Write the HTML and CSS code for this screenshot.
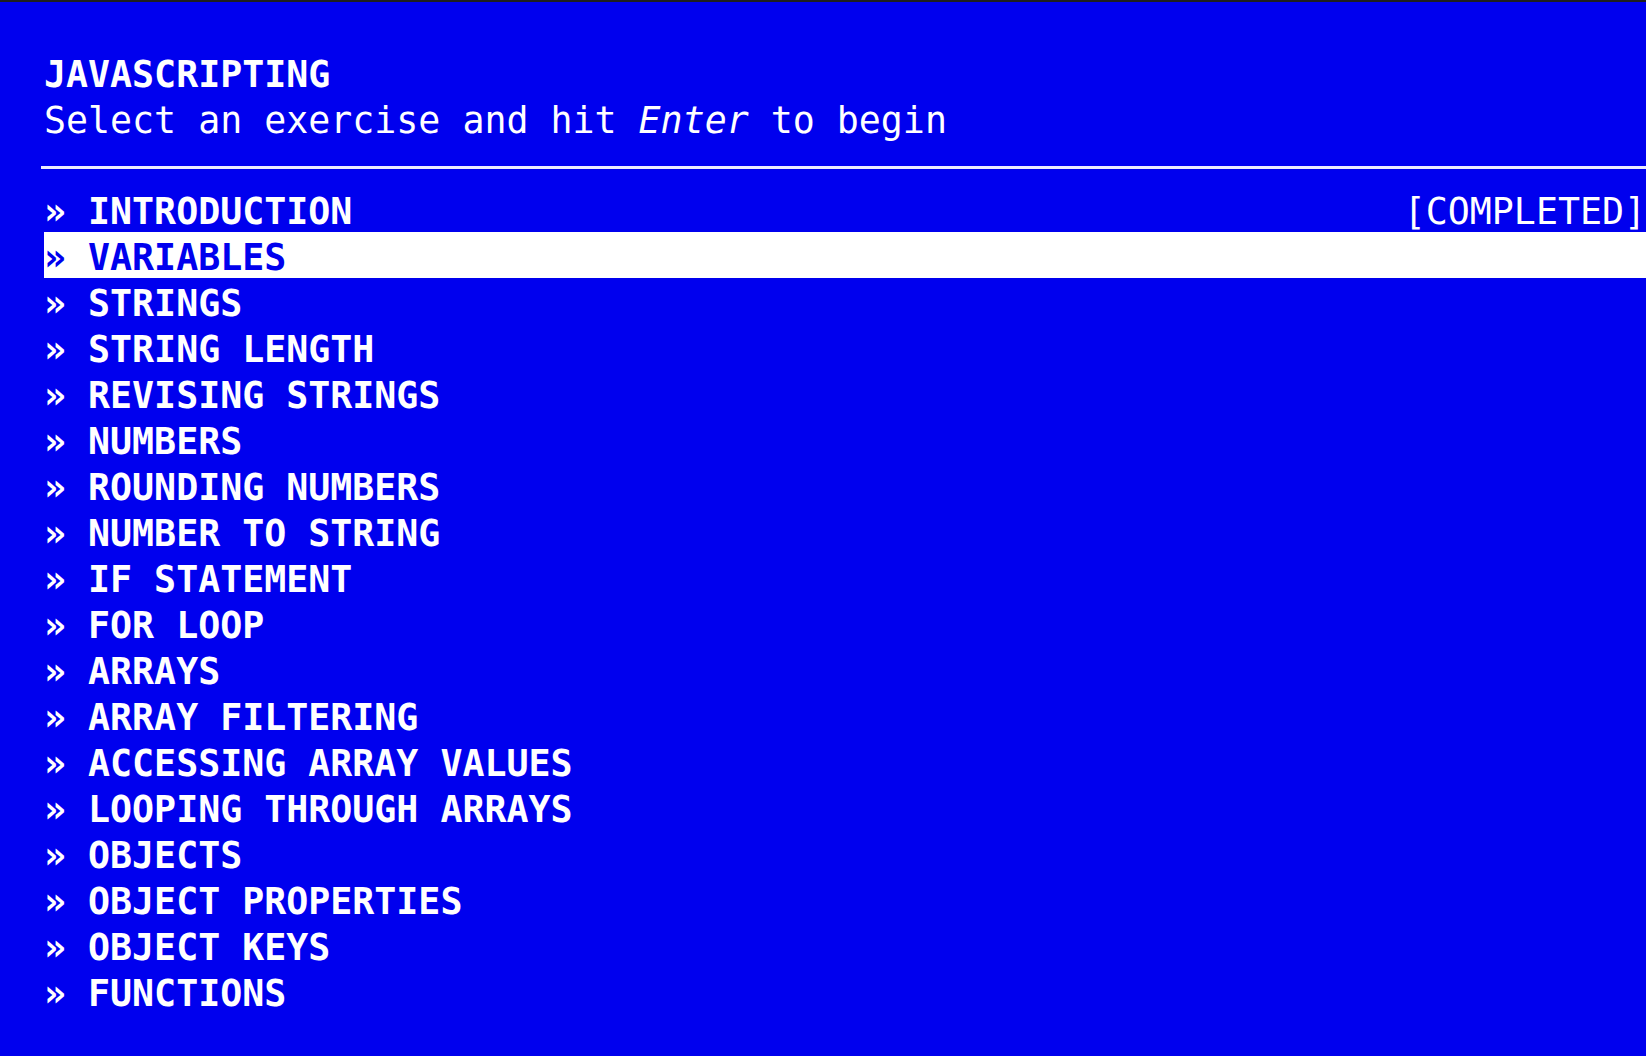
FILE: index.html
```html
<!DOCTYPE html>
<html lang="en">
<head>
<meta charset="utf-8">
<title>JAVASCRIPTING</title>
<link rel="stylesheet" href="styles.css">
</head>
<body>
<main class="screen">
  <header class="head">
    <div class="line title">JAVASCRIPTING</div>
    <div class="line subtitle">Select an exercise and hit <em>Enter</em> to begin</div>
  </header>
  <div class="rule"></div>
  <ul class="menu">
    <li class="item"><span class="name">» INTRODUCTION</span><span class="status">[COMPLETED]</span></li>
    <li class="item active"><span class="name">» VARIABLES</span></li>
    <li class="item"><span class="name">» STRINGS</span></li>
    <li class="item"><span class="name">» STRING LENGTH</span></li>
    <li class="item"><span class="name">» REVISING STRINGS</span></li>
    <li class="item"><span class="name">» NUMBERS</span></li>
    <li class="item"><span class="name">» ROUNDING NUMBERS</span></li>
    <li class="item"><span class="name">» NUMBER TO STRING</span></li>
    <li class="item"><span class="name">» IF STATEMENT</span></li>
    <li class="item"><span class="name">» FOR LOOP</span></li>
    <li class="item"><span class="name">» ARRAYS</span></li>
    <li class="item"><span class="name">» ARRAY FILTERING</span></li>
    <li class="item"><span class="name">» ACCESSING ARRAY VALUES</span></li>
    <li class="item"><span class="name">» LOOPING THROUGH ARRAYS</span></li>
    <li class="item"><span class="name">» OBJECTS</span></li>
    <li class="item"><span class="name">» OBJECT PROPERTIES</span></li>
    <li class="item"><span class="name">» OBJECT KEYS</span></li>
    <li class="item"><span class="name">» FUNCTIONS</span></li>
  </ul>
</main>
</body>
</html>
```
FILE: styles.css
```css
html, body {
  margin: 0;
  padding: 0;
  height: 100%;
  background: #0000ee;
  overflow: hidden;
}

body {
  border-top: 2px solid #1e1e1e;
  box-sizing: border-box;
  color: #ffffff;
  font-family: "DejaVu Sans Mono", "Liberation Mono", monospace;
  font-size: 36.6px;
}

.screen {
  padding: 47px 0 0 44px;
}

.line {
  height: 40px;
  line-height: 40px;
  padding-top: 6px;
  white-space: pre;
}

.title {
  font-weight: bold;
}

.subtitle {
  font-weight: normal;
}

.subtitle em {
  font-style: italic;
}

.rule {
  margin: 25px 0 0 -3px;
  height: 0;
  border-top: 3px solid rgba(255, 255, 255, 0.92);
}

.menu {
  list-style: none;
  margin: 17px 0 0 0;
  padding: 0;
}

.item {
  display: flex;
  justify-content: space-between;
  height: 40px;
  line-height: 40px;
  padding-top: 6px;
  white-space: pre;
}

.item .name {
  font-weight: bold;
}

.item .status {
  font-weight: normal;
}

.item.active {
  background: #ffffff;
  color: #0000ee;
}
```
